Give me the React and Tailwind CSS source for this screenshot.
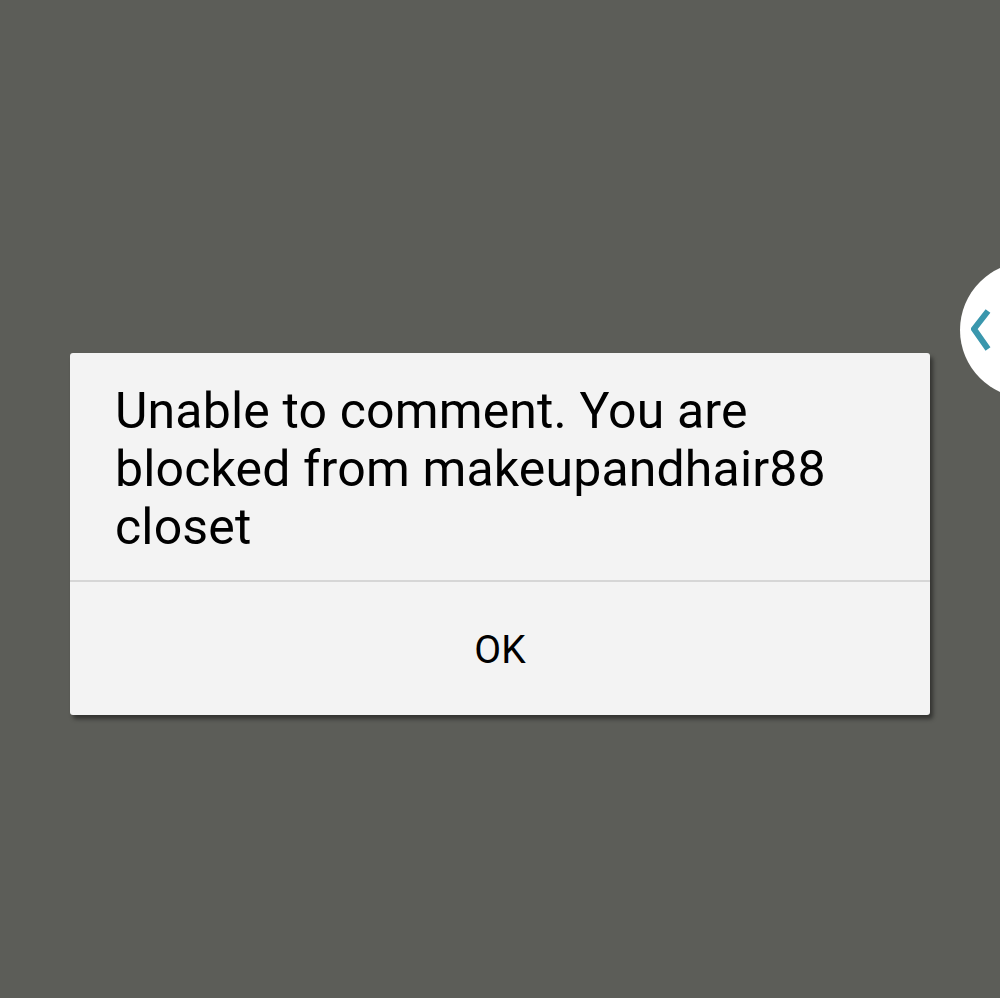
export default function App() {
  return (
    <div className="relative w-[1000px] h-[998px] overflow-hidden bg-[#5c5d58]" style={{ fontFamily: 'Roboto, "Noto Sans", sans-serif' }}>
      <div className="absolute left-[960px] top-[262px] w-[136px] h-[136px] rounded-full bg-white flex items-center pl-[11px]">
        <svg width="20" height="42" viewBox="0 0 20 42">
          <path d="M17 2 L3 20 L17 40" fill="none" stroke="#3a97ad" strokeWidth="6" strokeLinejoin="miter" />
        </svg>
      </div>
      <div className="pt-[353px] pl-[70px]">
        <div className="w-[860px] h-[362px] bg-[#f3f3f3] rounded-[3px] shadow-[3px_4px_4px_rgba(0,0,0,0.45)] flex flex-col">
          <div className="h-[229px] border-b-2 border-[#d6d6d6] pl-[45px] pt-[29px] text-[50px] leading-[58px] tracking-[0.15px] text-black">
            Unable to comment. You are<br />blocked from makeupandhair88<br />closet
          </div>
          <div className="flex-1 flex items-center justify-center text-[39px] text-black pt-[4px]">OK</div>
        </div>
      </div>
    </div>
  );
}
